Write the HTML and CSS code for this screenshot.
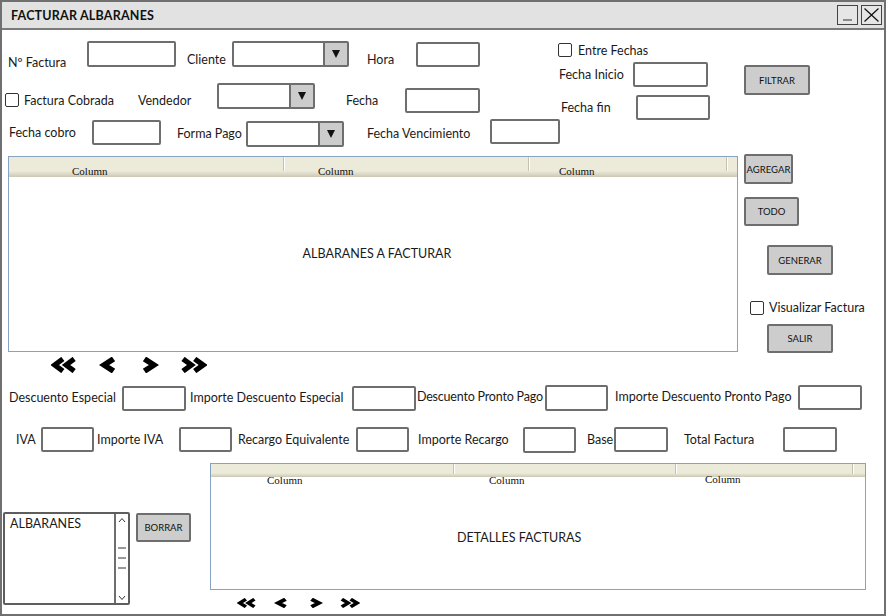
FILE: index.html
```html
<!DOCTYPE html>
<html lang="es">
<head>
<meta charset="utf-8">
<title>Facturar Albaranes</title>
<link rel="stylesheet" href="styles.css">
</head>
<body>
<div class="win">
  <div class="titlebar">
    <span class="title">FACTURAR ALBARANES</span>
    <div class="winctl">
      <span class="wbtn"><span class="minbar"></span></span>
      <span class="wbtn"><svg class="xicon" viewBox="0 0 17 16"><path d="M1.5 1.5L15.5 14.5M15.5 1.5L1.5 14.5" stroke="#111" stroke-width="1.2" fill="none"/></svg></span>
    </div>
  </div>

  <div class="sec-a">
    <div class="a-left">
      <div class="row r1">
        <span class="lbl l-nfact">Nº Factura</span>
        <span class="inp i-nfact"></span>
        <span class="lbl l-cliente">Cliente</span>
        <span class="combo c-cliente"><span class="cbtn"><span class="tri"></span></span></span>
        <span class="lbl l-hora">Hora</span>
        <span class="inp i-hora"></span>
      </div>
      <div class="row r2">
        <span class="cb cb-cobrada"></span>
        <span class="lbl l-cobrada">Factura Cobrada</span>
        <span class="lbl l-vend">Vendedor</span>
        <span class="combo c-vend"><span class="cbtn"><span class="tri"></span></span></span>
        <span class="lbl l-fecha">Fecha</span>
        <span class="inp i-fecha"></span>
      </div>
      <div class="row r3">
        <span class="lbl l-fcobro">Fecha cobro</span>
        <span class="inp i-fcobro"></span>
        <span class="lbl l-fpago">Forma Pago</span>
        <span class="combo c-fpago"><span class="cbtn"><span class="tri"></span></span></span>
        <span class="lbl l-fvenc">Fecha Vencimiento</span>
        <span class="inp i-fvenc"></span>
      </div>
    </div>
    <div class="a-mid">
      <div class="entre">
        <span class="cb"></span>
        <span class="lbl l-entre">Entre Fechas</span>
      </div>
      <div class="finicio">
        <span class="lbl l-finicio">Fecha Inicio</span>
        <span class="inp i-finicio"></span>
      </div>
      <div class="ffin">
        <span class="lbl l-ffin">Fecha fin</span>
        <span class="inp i-ffin"></span>
      </div>
    </div>
    <span class="btn b-filtrar">FILTRAR</span>
  </div>

  <div class="sec-b">
    <div class="b-left">
      <div class="table t1">
        <div class="thead">
          <span class="th t1c1">Column</span>
          <span class="th t1c2">Column</span>
          <span class="th t1c3">Column</span>
        </div>
        <div class="tbody t1body">ALBARANES A FACTURAR</div>
      </div>
      <div class="pager pager1">
        <svg class="pd" viewBox="0 0 26 15" preserveAspectRatio="none"><path d="M11 1.8L3.5 7.5L11 13.2M21.5 1.8L14 7.5L21.5 13.2" stroke="#000" stroke-width="4.8" fill="none"/></svg>
        <svg class="ps pg-gap1" viewBox="0 0 17 15" preserveAspectRatio="none"><path d="M13 1.8L4.5 7.5L13 13.2" stroke="#000" stroke-width="5.2" fill="none"/></svg>
        <svg class="ps pg-gap2" viewBox="0 0 17 15" preserveAspectRatio="none"><path d="M4 1.8L12.5 7.5L4 13.2" stroke="#000" stroke-width="5.2" fill="none"/></svg>
        <svg class="pd pg-gap3" viewBox="0 0 26 15" preserveAspectRatio="none"><path d="M4.5 1.8L12 7.5L4.5 13.2M15 1.8L22.5 7.5L15 13.2" stroke="#000" stroke-width="4.8" fill="none"/></svg>
      </div>
    </div>
    <div class="b-right">
      <span class="btn b-agregar">AGREGAR</span>
      <span class="btn b-todo">TODO</span>
      <span class="btn b-generar">GENERAR</span>
      <div class="vis">
        <span class="cb"></span>
        <span class="lbl">Visualizar Factura</span>
      </div>
      <span class="btn b-salir">SALIR</span>
    </div>
  </div>

  <div class="row r4">
    <span class="lbl l-desc">Descuento Especial</span>
    <span class="inp i-desc"></span>
    <span class="lbl l-idesc">Importe Descuento Especial</span>
    <span class="inp i-idesc"></span>
    <span class="lbl l-dpp">Descuento Pronto Pago</span>
    <span class="inp i-dpp"></span>
    <span class="lbl l-idpp">Importe Descuento Pronto Pago</span>
    <span class="inp i-idpp"></span>
  </div>

  <div class="row r5">
    <span class="lbl l-iva">IVA</span>
    <span class="inp i-sm"></span>
    <span class="lbl l-iiva">Importe IVA</span>
    <span class="inp i-sm"></span>
    <span class="lbl l-req">Recargo Equivalente</span>
    <span class="inp i-sm"></span>
    <span class="lbl l-irec">Importe Recargo</span>
    <span class="inp i-sm i-irec"></span>
    <span class="lbl l-base">Base</span>
    <span class="inp i-sm2"></span>
    <span class="lbl l-total">Total Factura</span>
    <span class="inp i-sm2"></span>
  </div>

  <div class="sec-d">
    <div class="listbox">
      <span class="lb-text">ALBARANES</span>
      <span class="lb-scroll">
        <svg class="lb-svg" viewBox="0 0 12 89"><path d="M3 8L6 4.5L9 8" stroke="#333" stroke-width="1" fill="none"/><path d="M2 34H10M2 44H10M2 54H10" stroke="#777" stroke-width="1.6"/><path d="M3 82L6 85.5L9 82" stroke="#333" stroke-width="1" fill="none"/></svg>
      </span>
    </div>
    <span class="btn b-borrar">BORRAR</span>
    <div class="d-table">
      <div class="table t2">
        <div class="thead thead2">
          <span class="th t2c1">Column</span>
          <span class="th t2c2">Column</span>
          <span class="th t2c3">Column</span>
        </div>
        <div class="tbody t2body">DETALLES FACTURAS</div>
      </div>
      <div class="pager pager2">
        <svg class="pd" viewBox="0 0 26 15" preserveAspectRatio="none"><path d="M11 1.8L3.5 7.5L11 13.2M21.5 1.8L14 7.5L21.5 13.2" stroke="#000" stroke-width="4.8" fill="none"/></svg>
        <svg class="ps pg-gap1" viewBox="0 0 17 15" preserveAspectRatio="none"><path d="M13 1.8L4.5 7.5L13 13.2" stroke="#000" stroke-width="5.2" fill="none"/></svg>
        <svg class="ps pg-gap2" viewBox="0 0 17 15" preserveAspectRatio="none"><path d="M4 1.8L12.5 7.5L4 13.2" stroke="#000" stroke-width="5.2" fill="none"/></svg>
        <svg class="pd pg-gap3" viewBox="0 0 26 15" preserveAspectRatio="none"><path d="M4.5 1.8L12 7.5L4.5 13.2M15 1.8L22.5 7.5L15 13.2" stroke="#000" stroke-width="4.8" fill="none"/></svg>
      </div>
    </div>
  </div>
</div>
</body>
</html>
```

FILE: styles.css
```css
html, body {
  margin: 0;
  padding: 0;
  background: #ffffff;
}

body {
  font-family: Lato, "Open Sans", sans-serif;
  font-size: 12.5px;
  color: #1a1a1a;
}

.win {
  width: 886px;
  height: 616px;
  box-sizing: border-box;
  border: 2px solid #707070;
  background: #ffffff;
  overflow: hidden;
}

/* title bar */
.titlebar {
  height: 26px;
  border-bottom: 2px solid #7a7a7a;
  background: #e2e2e2;
  display: flex;
  align-items: center;
  justify-content: space-between;
}

.title {
  padding-left: 9px;
  font-weight: bold;
  font-size: 12.5px;
  letter-spacing: 0.2px;
  color: #111;
}

.winctl {
  display: flex;
  gap: 3px;
  margin-right: 2px;
}

.wbtn {
  width: 21px;
  height: 20px;
  box-sizing: border-box;
  border: 1.5px solid #444;
  background: #e6e6e6;
  display: flex;
  align-items: center;
  justify-content: center;
}

.minbar {
  width: 9px;
  height: 2px;
  background: #8a8a8a;
  margin-top: 9px;
}

.xicon {
  width: 17px;
  height: 16px;
}

/* common widgets */
.row {
  display: flex;
  align-items: flex-start;
}

.lbl {
  flex: none;
  line-height: 14px;
  white-space: nowrap;
}

.inp {
  flex: none;
  box-sizing: border-box;
  border: 2px solid #6e6e6e;
  border-radius: 2px;
  background: #ffffff;
}

.combo {
  flex: none;
  display: flex;
  box-sizing: border-box;
  border: 2px solid #6e6e6e;
  border-radius: 2px;
  background: #ffffff;
}

.cbtn {
  margin-left: auto;
  width: 24px;
  box-sizing: border-box;
  border-left: 2px solid #6e6e6e;
  background: #cccccc;
  display: flex;
  align-items: center;
  justify-content: center;
}

.tri {
  width: 0;
  height: 0;
  border-left: 4.5px solid transparent;
  border-right: 4.5px solid transparent;
  border-top: 8px solid #111;
}

.cb {
  flex: none;
  width: 14px;
  height: 14px;
  box-sizing: border-box;
  border: 1.5px solid #333;
  border-radius: 2px;
  background: #fff;
}

.btn {
  flex: none;
  box-sizing: border-box;
  border: 2px solid #6e6e6e;
  border-radius: 2px;
  background: #cdcdcd;
  display: flex;
  align-items: center;
  justify-content: center;
  font-size: 9.5px;
  color: #111;
}

/* section A */
.sec-a {
  display: flex;
  align-items: flex-start;
  height: 120px;
}

.a-left {
  width: 556px;
  flex: none;
}

.r1 { height: 53px; }
.l-nfact { margin: 26px 0 0 6px; width: 79px; }
.i-nfact { margin-top: 11px; width: 89px; height: 26px; }
.l-cliente { margin: 23px 0 0 11px; width: 45px; }
.c-cliente { margin-top: 11px; width: 117px; height: 26px; }
.l-hora { margin: 23px 0 0 18px; width: 49px; }
.i-hora { margin-top: 12px; width: 64px; height: 25px; }

.r2 { height: 36px; }
.cb-cobrada { margin: 10px 0 0 3px; }
.l-cobrada { margin: 11px 0 0 5px; width: 114px; }
.l-vend { margin-top: 11px; width: 79px; }
.c-vend { width: 98px; height: 26px; }
.l-fecha { margin: 11px 0 0 31px; width: 59px; }
.i-fecha { margin-top: 5px; width: 75px; height: 25px; }

.r3 { height: 31px; }
.l-fcobro { margin: 7px 0 0 7px; width: 83px; }
.i-fcobro { margin-top: 1px; width: 69px; height: 25px; }
.l-fpago { margin: 8px 0 0 16px; width: 69px; }
.c-fpago { margin-top: 2px; width: 98px; height: 26px; }
.l-fvenc { margin: 8px 0 0 23px; width: 123px; }
.i-fvenc { width: 70px; height: 25px; }

.a-mid {
  width: 186px;
  flex: none;
}

.entre {
  margin-top: 13px;
  height: 14px;
  display: flex;
  align-items: center;
}

.l-entre { margin: 1px 0 0 6px; }

.finicio {
  margin-top: 5px;
  display: flex;
  align-items: center;
}

.l-finicio { margin-left: 1px; width: 74px; }
.i-finicio { width: 75px; height: 25px; }

.ffin {
  margin-top: 8px;
  display: flex;
  align-items: center;
}

.l-ffin { margin-left: 3px; width: 75px; }
.i-ffin { width: 74px; height: 25px; }

.b-filtrar { margin-top: 35px; width: 66px; height: 30px; }

/* tables */
.table {
  box-sizing: border-box;
  border: 1px solid #87a3c3;
  background: #ffffff;
  display: flex;
  flex-direction: column;
}

.thead {
  display: flex;
  height: 20px;
  flex: none;
  background: linear-gradient(#ecead9 0%, #ecead9 70%, #dcd8c6 86%, #cbc7b4 100%);
}

.th {
  position: relative;
  box-sizing: border-box;
  font-family: "Liberation Serif", "Times New Roman", serif;
  font-size: 11px;
  line-height: 12px;
  color: #111;
  white-space: nowrap;
  flex: none;
}

.th::after {
  content: "";
  position: absolute;
  right: 0;
  top: 0;
  width: 1px;
  height: 14px;
  background: #c4c1b1;
  box-shadow: 1px 0 0 #ffffff;
}

.t1c1 { width: 275px; padding: 8px 0 0 63px; }
.t1c2 { width: 245px; padding: 8px 0 0 34px; }
.t1c3 { width: 198px; padding: 8px 0 0 30px; }

.tbody {
  flex: 1;
  white-space: nowrap;
}

.t1body {
  text-align: center;
  padding-top: 70px;
  padding-left: 8px;
  line-height: 14px;
}

.thead2 { height: 13px; }
.thead2 .th::after { height: 10px; }
.t2c1 { width: 243px; padding: 10px 0 0 56px; }
.t2c2 { width: 222px; padding: 10px 0 0 35px; }
.t2c3 { width: 177px; padding: 9px 0 0 29px; }

.t2body {
  padding-top: 54px;
  padding-left: 246px;
  line-height: 14px;
}

/* section B */
.sec-b {
  display: flex;
  align-items: flex-start;
  height: 230px;
}

.b-left { margin-left: 6px; flex: none; }

.t1 { margin-top: 6px; width: 730px; height: 196px; }

.pager {
  display: flex;
  align-items: flex-start;
}

.pager1 { margin: 5px 0 0 43px; height: 16px; }
.pager1 .pd { width: 28px; height: 16px; }
.pager1 .ps { width: 19px; height: 16px; }
.pager1 .pg-gap1 { margin-left: 20px; }
.pager1 .pg-gap2 { margin-left: 22px; }
.pager1 .pg-gap3 { margin-left: 19px; width: 29px; }

.b-right {
  margin-left: 6px;
  display: flex;
  flex-direction: column;
  align-items: flex-start;
}

.b-agregar { margin-top: 4px; width: 49px; height: 30px; }
.b-todo { margin-top: 13px; width: 55px; height: 29px; }
.b-generar { margin: 19px 0 0 23px; width: 66px; height: 30px; }

.vis {
  margin: 26px 0 0 6px;
  display: flex;
  align-items: center;
  gap: 5px;
}

.b-salir { margin: 9px 0 0 23px; width: 66px; height: 29px; }

/* rows 4 and 5 */
.r4 { height: 42px; }
.l-desc { margin: 11px 0 0 7px; width: 113px; }
.i-desc { margin-top: 6px; width: 64px; height: 25px; }
.l-idesc { margin: 11px 0 0 4px; width: 162px; }
.i-idesc { margin-top: 6px; width: 64px; height: 25px; }
.l-dpp { margin: 10px 0 0 1px; width: 128px; letter-spacing: -0.2px; }
.i-dpp { margin-top: 5px; width: 63px; height: 26px; }
.l-idpp { margin: 10px 0 0 7px; width: 183px; }
.i-idpp { margin-top: 5px; width: 64px; height: 25px; }

.r5 { height: 41px; }
.r5 .lbl { margin-top: 11px; }
.r5 .inp { margin-top: 5px; height: 25px; }
.i-sm { width: 53px; }
.i-sm2 { width: 54px; }
.r5 .i-irec { height: 26px; }
.r5 .l-iva { margin-left: 14px; width: 25px; }
.r5 .l-iiva { margin-left: 3px; width: 82px; }
.r5 .l-req { margin-left: 6px; width: 118px; }
.r5 .l-irec { margin-left: 9px; width: 105px; }
.r5 .l-base { margin-left: 11px; width: 27px; }
.r5 .l-total { margin-left: 16px; width: 99px; }

/* section D */
.sec-d {
  display: flex;
  align-items: flex-start;
}

.listbox {
  flex: none;
  margin: 49px 0 0 1px;
  width: 127px;
  height: 93px;
  box-sizing: border-box;
  border: 2px solid #5e5e5e;
  border-radius: 2px;
  display: flex;
}

.lb-text {
  flex: 1;
  padding: 3px 0 0 5px;
  line-height: 14px;
}

.lb-scroll {
  width: 14px;
  box-sizing: border-box;
  border-left: 2px solid #6e6e6e;
}

.lb-svg {
  display: block;
  width: 12px;
  height: 89px;
}

.b-borrar { margin: 50px 0 0 6px; width: 55px; height: 29px; }

.d-table { margin-left: 19px; flex: none; }

.t2 { width: 656px; height: 127px; }

.pager2 { margin: 8px 0 0 27px; height: 10px; }
.pager2 .pd { width: 21px; height: 10px; }
.pager2 .ps { width: 15px; height: 10px; }
.pager2 .pg-gap1 { margin-left: 16px; }
.pager2 .pg-gap2 { margin-left: 19px; }
.pager2 .pg-gap3 { margin-left: 15px; width: 22px; }
```
